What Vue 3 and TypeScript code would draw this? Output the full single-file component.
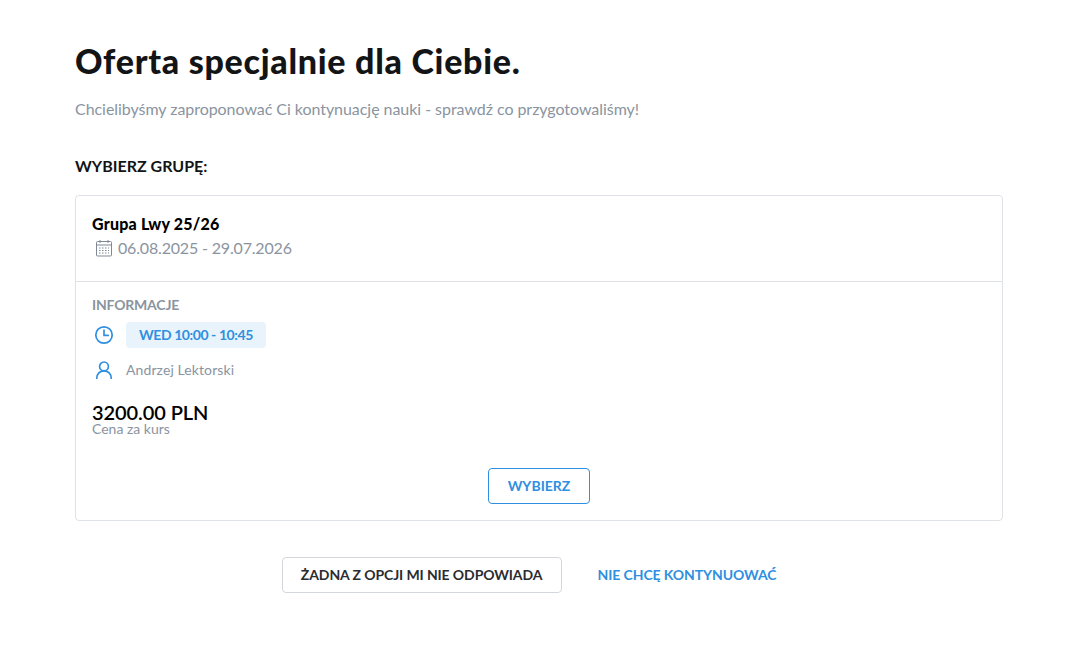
<template>
  <main class="page">
    <h1 class="title">Oferta specjalnie dla Ciebie.</h1>
    <p class="subtitle">Chcielibyśmy zaproponować Ci kontynuację nauki - sprawdź co przygotowaliśmy!</p>
    <h2 class="section-label">WYBIERZ GRUPĘ:</h2>

    <section class="card">
      <header class="card-head">
        <div class="group-name">{{ group.name }}</div>
        <div class="group-dates">
          <svg class="calendar" viewBox="0 0 18 18" fill="none" stroke="#7f8995">
            <rect x="1.5" y="2.5" width="15" height="14.5" rx="1" />
            <path d="M1.5 6h15M5 1v3M13 1v3" />
            <path
              d="M4 9h1.5M7 9h1.5M10 9h1.5M13 9h1M4 11.5h1.5M7 11.5h1.5M10 11.5h1.5M13 11.5h1M4 14h1.5M7 14h1.5M10 14h1.5M13 14h1"
              stroke-width="1"
            />
          </svg>
          <span>{{ group.dates }}</span>
        </div>
      </header>

      <div class="card-body">
        <div class="info-label">INFORMACJE</div>
        <div class="info-row time-row">
          <svg class="icon" viewBox="0 0 20 20" fill="none" stroke="#2f8fe0" stroke-width="1.7" stroke-linecap="round" stroke-linejoin="round">
            <circle cx="10" cy="10" r="8.2" />
            <path d="M10 5.2V10.4H14.2" />
          </svg>
          <span class="time-badge">{{ group.time }}</span>
        </div>
        <div class="info-row teacher-row">
          <svg class="icon" viewBox="0 0 20 20" fill="none" stroke="#2f8fe0" stroke-width="1.7" stroke-linecap="round">
            <circle cx="10" cy="6.4" r="4.4" />
            <path d="M2.8 18.2c0-4.2 3-7.4 7.2-7.4s7.2 3.2 7.2 7.4" />
          </svg>
          <span class="teacher">{{ group.teacher }}</span>
        </div>
        <div class="price">{{ group.price }}</div>
        <div class="price-note">Cena za kurs</div>
        <div class="choose-wrap">
          <button class="btn btn-outline" type="button">WYBIERZ</button>
        </div>
      </div>
    </section>

    <div class="actions">
      <button class="btn btn-neutral" type="button">ŻADNA Z OPCJI MI NIE ODPOWIADA</button>
      <button class="btn btn-link" type="button">NIE CHCĘ KONTYNUOWAĆ</button>
    </div>
  </main>
</template>

<script setup lang="ts">
const group = {
  name: "Grupa Lwy 25/26",
  dates: "06.08.2025 - 29.07.2026",
  time: "WED 10:00 - 10:45",
  teacher: "Andrzej Lektorski",
  price: "3200.00 PLN",
};
</script>

<style>
body {
  background: #fff;
}
</style>

<style scoped>
.page {
  width: 928px;
  margin-left: 75px;
  padding-top: 38px;
  font-family: Lato, "Open Sans", sans-serif;
  color: #131416;
}

.title {
  margin: 0;
  font-size: 34px;
  line-height: 46px;
  font-weight: 900;
  letter-spacing: 0.72px;
}

.subtitle {
  margin: 15px 0 0;
  font-size: 16px;
  line-height: 20px;
  letter-spacing: -0.05px;
  color: #8a94a0;
}

.section-label {
  margin: 37px 0 0;
  font-size: 16px;
  line-height: 20px;
  font-weight: 700;
}

.card {
  margin-top: 19px;
  border: 1px solid #dfe2e6;
  border-radius: 4px;
}

.card-head {
  height: 86px;
  box-sizing: border-box;
  padding: 18px 16px 0;
  border-bottom: 1px solid #dfe2e6;
}

.group-name {
  font-size: 16px;
  line-height: 20px;
  font-weight: 900;
  letter-spacing: 0.2px;
  color: #000;
}

.group-dates {
  display: flex;
  align-items: center;
  gap: 5px;
  margin-top: 4px;
  padding-left: 3px;
  font-size: 16px;
  line-height: 20px;
  letter-spacing: -0.17px;
  color: #8a94a0;
}

.calendar {
  width: 18px;
  height: 18px;
}

.card-body {
  padding: 14px 16px 16px;
}

.info-label {
  font-size: 14px;
  line-height: 17px;
  font-weight: 700;
  letter-spacing: -0.2px;
  color: #8a94a0;
}

.info-row {
  display: flex;
  align-items: center;
  gap: 12px;
  padding-left: 2px;
}

.time-row {
  margin-top: 9px;
}

.teacher-row {
  margin-top: 9px;
}

.icon {
  width: 20px;
  height: 20px;
}

.time-badge {
  padding: 0 13px;
  height: 26px;
  line-height: 26px;
  border-radius: 4px;
  background: #e8f3fb;
  color: #2f8fe0;
  font-size: 14px;
  font-weight: 700;
  letter-spacing: -0.42px;
}

.teacher {
  height: 26px;
  line-height: 26px;
  font-size: 14px;
  letter-spacing: 0.1px;
  color: #8a94a0;
}

.price {
  margin-top: 19px;
  font-size: 20px;
  line-height: 20px;
  font-weight: 600;
  letter-spacing: -0.08px;
  color: #000;
}

.price-note {
  font-size: 14px;
  line-height: 14px;
  color: #8a94a0;
}

.choose-wrap {
  display: flex;
  justify-content: center;
  margin-top: 32px;
}

.btn {
  box-sizing: border-box;
  height: 36px;
  padding-bottom: 2px;
  border-radius: 4px;
  background: #fff;
  font-family: inherit;
  font-size: 14px;
  font-weight: 700;
}

.btn-outline {
  width: 102px;
  border: 1px solid #2f8fe0;
  color: #2f8fe0;
}

.actions {
  display: flex;
  justify-content: center;
  gap: 16px;
  margin-top: 36px;
}

.btn-neutral {
  width: 280px;
  border: 1px solid #d3d7dc;
  color: #2a2c30;
  letter-spacing: -0.1px;
}

.btn-link {
  border: none;
  padding: 0 20px 2px;
  color: #2f8fe0;
  letter-spacing: -0.1px;
}
</style>
